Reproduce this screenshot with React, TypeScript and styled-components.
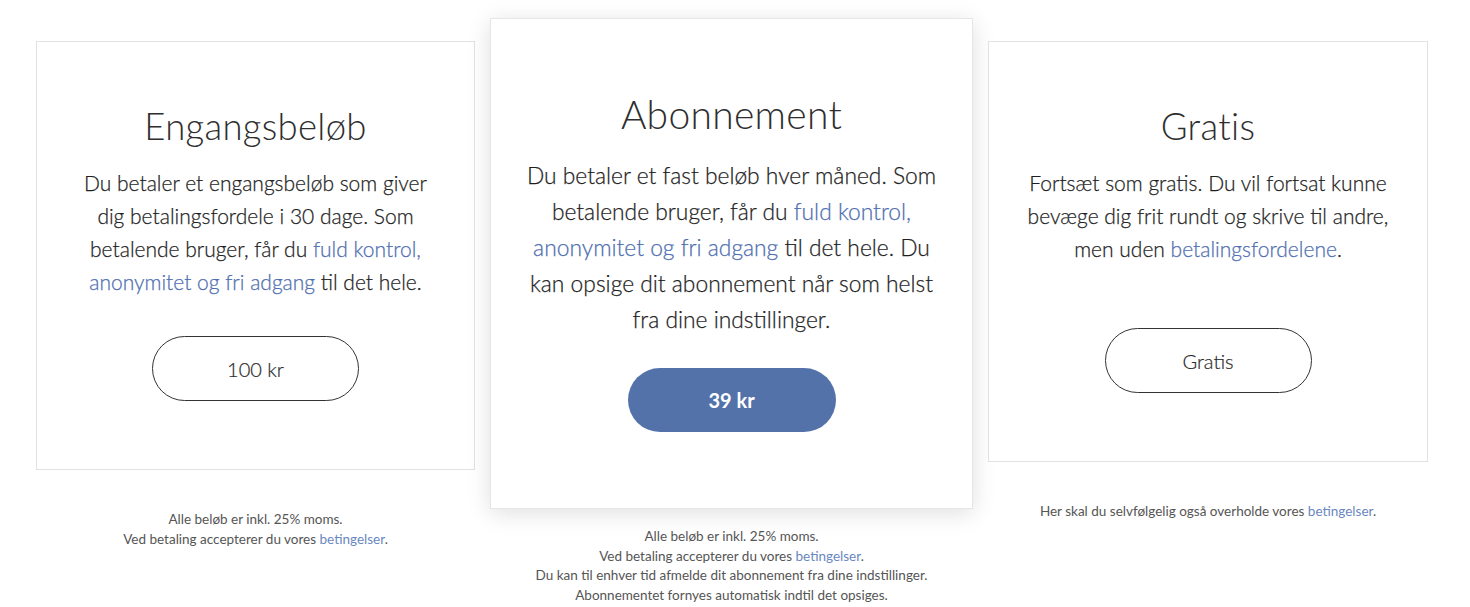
import React from "react";
import styled, { createGlobalStyle, css } from "styled-components";

const Global = createGlobalStyle`
  html, body { margin: 0; padding: 0; background: #ffffff; }
  body { font-family: "Lato", "Open Sans", sans-serif; color: #333; }
  * { box-sizing: border-box; }
`;

const Page = styled.div`
  display: flex;
  align-items: flex-start;
  gap: 15px;
  padding: 41px 0 0 36px;
  width: 1470px;
  height: 607px;
  overflow: hidden;
`;

const Column = styled.div<{ $w: number; $featured?: boolean }>`
  display: flex;
  flex-direction: column;
  width: ${(p) => p.$w}px;
  flex: none;
  margin-top: ${(p) => (p.$featured ? -23 : 0)}px;
`;

const Card = styled.div<{ $featured?: boolean }>`
  display: flex;
  flex-direction: column;
  align-items: center;
  background: #fff;
  border: 1px solid #e2e2e2;
  text-align: center;
  ${(p) =>
    p.$featured
      ? css`
          padding: 71px 30px 76px;
          box-shadow: 0 4px 22px rgba(0, 0, 0, 0.13);
          border-color: #e6e6e6;
        `
      : css`
          padding: 63px 30px 68px;
        `}
`;

const Title = styled.h2<{ $featured?: boolean }>`
  margin: 0;
  font-weight: 300;
  color: #2e2e2e;
  font-size: ${(p) => (p.$featured ? 39 : 36.5)}px;
  line-height: ${(p) => (p.$featured ? 48 : 43)}px;
  letter-spacing: 0.3px;
`;

const Body = styled.p<{ $featured?: boolean; $minH?: number }>`
  margin: ${(p) => (p.$featured ? 19 : 18)}px 0 0;
  font-weight: 300;
  color: #1f1f1f;
  font-size: ${(p) => (p.$featured ? 22.8 : 21)}px;
  line-height: ${(p) => (p.$featured ? 36 : 33)}px;
  min-height: ${(p) => p.$minH ?? 0}px;
  white-space: nowrap;
  -webkit-text-stroke: 0.25px currentColor;
`;

const Link = styled.span`
  color: #4f6fb0;
`;

const Button = styled.button<{ $filled?: boolean; $gap: number }>`
  margin-top: ${(p) => p.$gap}px;
  border-radius: 40px;
  font-family: inherit;
  font-size: 20px;
  cursor: pointer;
  ${(p) =>
    p.$filled
      ? css`
          width: 208px;
          height: 64px;
          background: #5472aa;
          border: none;
          color: #fff;
          font-weight: 700;
        `
      : css`
          width: 207px;
          height: 65px;
          background: #fff;
          border: 1.5px solid #333;
          color: #2a2a2a;
          font-weight: 300;
          -webkit-text-stroke: 0.2px currentColor;
        `}
`;

const Note = styled.div<{ $featured?: boolean }>`
  margin-top: ${(p) => (p.$featured ? 18 : 40)}px;
  text-align: center;
  font-size: 13.5px;
  line-height: 19.5px;
  color: #555;
`;

const NoteLink = styled.span`
  color: #6a87c0;
`;

export default function App() {
  return (
    <>
      <Global />
      <Page>
        <Column $w={439}>
          <Card>
            <Title>Engangsbeløb</Title>
            <Body>
              Du betaler et engangsbeløb som giver
              <br />
              dig betalingsfordele i 30 dage. Som
              <br />
              betalende bruger, får du <Link>fuld kontrol,</Link>
              <br />
              <Link>anonymitet og fri adgang</Link> til det hele.
            </Body>
            <Button $gap={38}>100 kr</Button>
          </Card>
          <Note>
            Alle beløb er inkl. 25% moms.
            <br />
            Ved betaling accepterer du vores <NoteLink>betingelser</NoteLink>.
          </Note>
        </Column>

        <Column $w={483} $featured>
          <Card $featured>
            <Title $featured>Abonnement</Title>
            <Body $featured>
              Du betaler et fast beløb hver måned. Som
              <br />
              betalende bruger, får du <Link>fuld kontrol,</Link>
              <br />
              <Link>anonymitet og fri adgang</Link> til det hele. Du
              <br />
              kan opsige dit abonnement når som helst
              <br />
              fra dine indstillinger.
            </Body>
            <Button $filled $gap={31}>
              39 kr
            </Button>
          </Card>
          <Note $featured>
            Alle beløb er inkl. 25% moms.
            <br />
            Ved betaling accepterer du vores <NoteLink>betingelser</NoteLink>.
            <br />
            Du kan til enhver tid afmelde dit abonnement fra dine indstillinger.
            <br />
            Abonnementet fornyes automatisk indtil det opsiges.
          </Note>
        </Column>

        <Column $w={440}>
          <Card>
            <Title>Gratis</Title>
            <Body $minH={124}>
              Fortsæt som gratis. Du vil fortsat kunne
              <br />
              bevæge dig frit rundt og skrive til andre,
              <br />
              men uden <Link>betalingsfordelene</Link>.
            </Body>
            <Button $gap={38}>Gratis</Button>
          </Card>
          <Note>
            Her skal du selvfølgelig også overholde vores{" "}
            <NoteLink>betingelser</NoteLink>.
          </Note>
        </Column>
      </Page>
    </>
  );
}
